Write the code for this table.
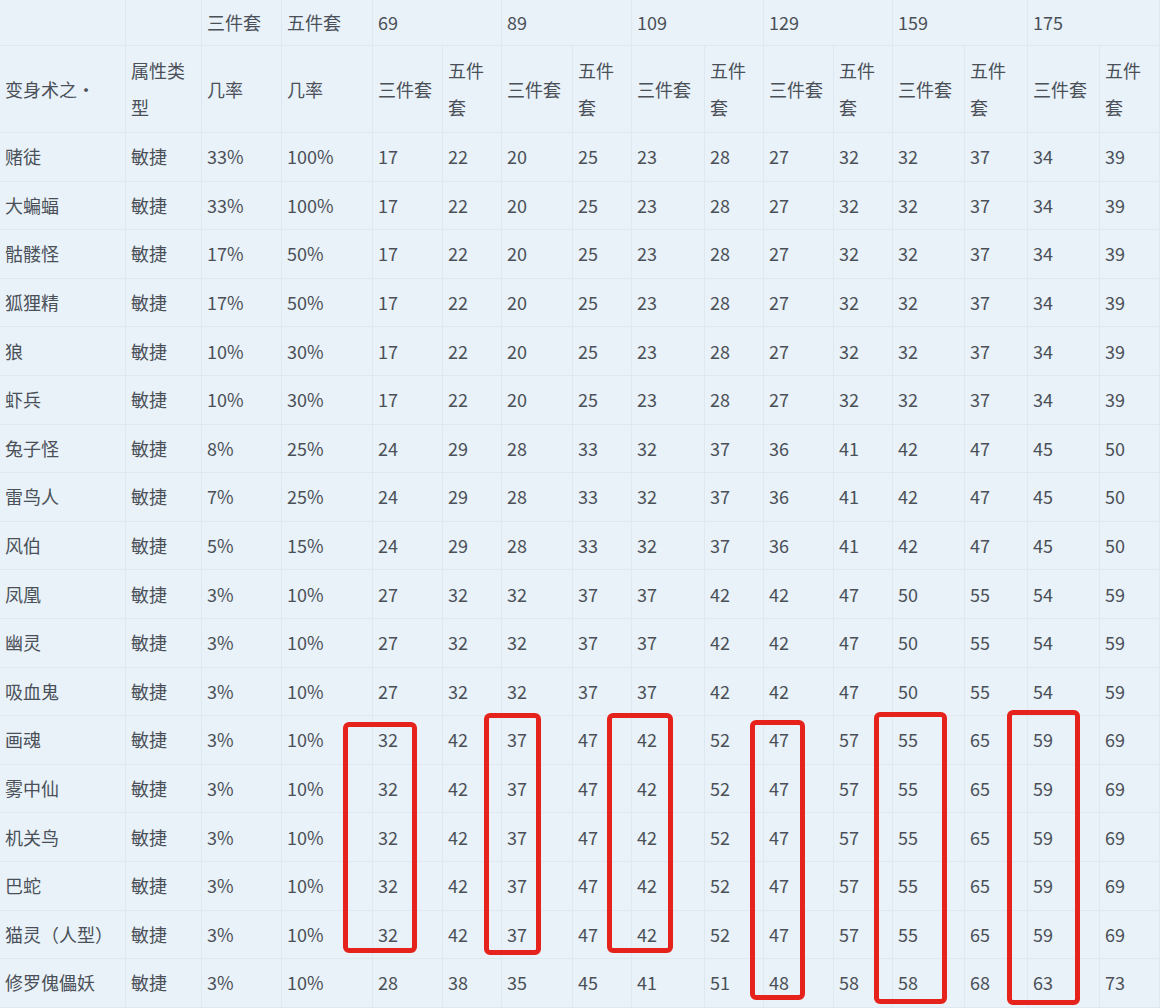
import React from "react";

const cols =
  "grid grid-cols-[126px_76px_80px_91px_70px_59px_71px_59px_73px_59px_70px_59px_72px_63px_72px_60px]";

const A = ["17", "22", "20", "25", "23", "28", "27", "32", "32", "37", "34", "39"];
const B = ["24", "29", "28", "33", "32", "37", "36", "41", "42", "47", "45", "50"];
const C = ["27", "32", "32", "37", "37", "42", "42", "47", "50", "55", "54", "59"];
const D = ["32", "42", "37", "47", "42", "52", "47", "57", "55", "65", "59", "69"];
const E = ["28", "38", "35", "45", "41", "51", "48", "58", "58", "68", "63", "73"];

const rows: [string, string, string, string[]][] = [
  ["赌徒", "33%", "100%", A],
  ["大蝙蝠", "33%", "100%", A],
  ["骷髅怪", "17%", "50%", A],
  ["狐狸精", "17%", "50%", A],
  ["狼", "10%", "30%", A],
  ["虾兵", "10%", "30%", A],
  ["兔子怪", "8%", "25%", B],
  ["雷鸟人", "7%", "25%", B],
  ["风伯", "5%", "15%", B],
  ["凤凰", "3%", "10%", C],
  ["幽灵", "3%", "10%", C],
  ["吸血鬼", "3%", "10%", C],
  ["画魂", "3%", "10%", D],
  ["雾中仙", "3%", "10%", D],
  ["机关鸟", "3%", "10%", D],
  ["巴蛇", "3%", "10%", D],
  ["猫灵（人型）", "3%", "10%", D],
  ["修罗傀儡妖", "3%", "10%", E],
];

const cell = "flex items-center pl-[5px] border-r border-b border-[#dde8f0] whitespace-nowrap";
const box = "absolute border-[5px] border-[#e5231c] rounded-[6px]";

export default function App() {
  return (
    <div
      className="relative w-[1160px] h-[1008px] overflow-hidden bg-[#e9f2f9] text-[#4b5058] text-[18px]"
      style={{ fontFamily: '"Noto Sans CJK SC", "Noto Sans", sans-serif' }}
    >
      {/* header row 1 */}
      <div className={`${cols} h-[46px]`}>
        <div className={cell}></div>
        <div className={cell}></div>
        <div className={cell}>三件套</div>
        <div className={cell}>五件套</div>
        <div className={`${cell} col-span-2`}>69</div>
        <div className={`${cell} col-span-2`}>89</div>
        <div className={`${cell} col-span-2`}>109</div>
        <div className={`${cell} col-span-2`}>129</div>
        <div className={`${cell} col-span-2`}>159</div>
        <div className={`${cell} col-span-2`}>175</div>
      </div>
      {/* header row 2 */}
      <div className={`${cols} h-[87px]`}>
        <div className={cell}>变身术之·</div>
        <div className={`${cell} leading-[37px]`}>
          <span>
            属性类
            <br />
            型
          </span>
        </div>
        <div className={cell}>几率</div>
        <div className={cell}>几率</div>
        {[0, 1, 2, 3, 4, 5].map((i) => (
          <React.Fragment key={i}>
            <div className={cell}>三件套</div>
            <div className={`${cell} leading-[37px]`}>
              <span>
                五件
                <br />
                套
              </span>
            </div>
          </React.Fragment>
        ))}
      </div>
      {rows.map(([name, p3, p5, vals], ri) => (
        <div key={ri} className={`${cols} h-[48.6px]`}>
          <div className={cell}>{name}</div>
          <div className={cell}>敏捷</div>
          <div className={cell}>{p3}</div>
          <div className={cell}>{p5}</div>
          {vals.map((v, i) => (
            <div key={i} className={cell}>
              {v}
            </div>
          ))}
        </div>
      ))}

      {/* red highlight boxes */}
      <div className={`${box} left-[343px] top-[722px] w-[74px] h-[231px]`} />
      <div className={`${box} left-[484px] top-[713px] w-[57px] h-[242px]`} />
      <div className={`${box} left-[607px] top-[713px] w-[66px] h-[240px]`} />
      <div className={`${box} left-[750px] top-[720px] w-[55px] h-[280px]`} />
      <div className={`${box} left-[874px] top-[712px] w-[73px] h-[292px]`} />
      <div className={`${box} left-[1007px] top-[710px] w-[73px] h-[295px]`} />
    </div>
  );
}
